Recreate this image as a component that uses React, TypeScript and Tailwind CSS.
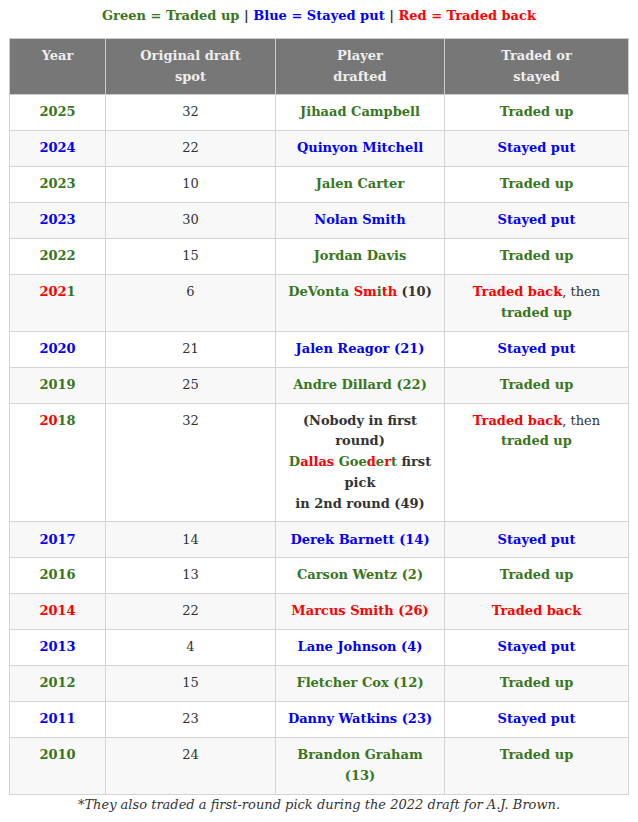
import React from 'react'

const G = 'text-[#38761d]'
const B = 'text-[#0000ff]'
const R = 'text-[#ff0000]'

type Row = {
  year: React.ReactNode
  spot: string
  player: React.ReactNode
  result: React.ReactNode
}

const up = <span className={`${G} font-bold`}>Traded up</span>
const put = <span className={`${B} font-bold`}>Stayed put</span>
const backThenUp = (
  <>
    <span className={`${R} font-bold`}>Traded back</span>, then{' '}
    <span className={`${G} font-bold`}>traded up</span>
  </>
)

const g = (t: string) => <span className={`${G} font-bold`}>{t}</span>
const b = (t: string) => <span className={`${B} font-bold`}>{t}</span>
const r = (t: string) => <span className={`${R} font-bold`}>{t}</span>

const rows: Row[] = [
  { year: g('2025'), spot: '32', player: g('Jihaad Campbell'), result: up },
  { year: b('2024'), spot: '22', player: b('Quinyon Mitchell'), result: put },
  { year: g('2023'), spot: '10', player: g('Jalen Carter'), result: up },
  { year: b('2023'), spot: '30', player: b('Nolan Smith'), result: put },
  { year: g('2022'), spot: '15', player: g('Jordan Davis'), result: up },
  {
    year: (
      <>
        {r('202')}
        {g('1')}
      </>
    ),
    spot: '6',
    player: (
      <>
        {g('DeVonta ')}
        {r('Sm')}
        {g('i')}
        {r('th')} <span className="font-bold">(10)</span>
      </>
    ),
    result: backThenUp,
  },
  { year: b('2020'), spot: '21', player: b('Jalen Reagor (21)'), result: put },
  { year: g('2019'), spot: '25', player: g('Andre Dillard (22)'), result: up },
  {
    year: (
      <>
        {r('20')}
        {g('18')}
      </>
    ),
    spot: '32',
    player: (
      <span className="font-bold">
        (Nobody in first round)
        <br />
        {g('D')}
        {r('allas')} {g('Goe')}
        {r('d')}
        {g('e')}
        {r('r')}
        {g('t')} first pick
        <br />
        in 2nd round (49)
      </span>
    ),
    result: backThenUp,
  },
  { year: b('2017'), spot: '14', player: b('Derek Barnett (14)'), result: put },
  { year: g('2016'), spot: '13', player: g('Carson Wentz (2)'), result: up },
  {
    year: r('2014'),
    spot: '22',
    player: r('Marcus Smith (26)'),
    result: <span className={`${R} font-bold`}>Traded back</span>,
  },
  { year: b('2013'), spot: '4', player: b('Lane Johnson (4)'), result: put },
  { year: g('2012'), spot: '15', player: g('Fletcher Cox (12)'), result: up },
  { year: b('2011'), spot: '23', player: b('Danny Watkins (23)'), result: put },
  { year: g('2010'), spot: '24', player: g('Brandon Graham (13)'), result: up },
]

export default function App() {
  return (
    <div
      className="w-[638px] min-h-[822px] bg-white text-[#333] text-[13px] leading-[20.75px]"
      style={{ fontFamily: '"DejaVu Serif", serif' }}
    >
      <p className="pt-[6px] pb-[11px] text-center font-bold text-[#333]">
        <span className={G}>Green = Traded up</span> |{' '}
        <span className={B}>Blue = Stayed put</span> |{' '}
        <span className={R}>Red = Traded back</span>
      </p>

      <table className="mx-[9px] w-[619px] table-fixed border-collapse text-center">
        <colgroup>
          <col className="w-[96px]" />
          <col className="w-[170px]" />
          <col className="w-[169px]" />
          <col className="w-[184px]" />
        </colgroup>
        <thead>
          <tr className="bg-[#777777] text-[#eeeeee] font-bold">
            <th className="border border-[#cccccc] px-[20px] py-[7px] align-top">Year</th>
            <th className="border border-[#cccccc] px-[30px] py-[7px] align-top">Original draft spot</th>
            <th className="border border-[#cccccc] px-[40px] py-[7px] align-top">Player drafted</th>
            <th className="border border-[#cccccc] px-[45px] py-[7px] align-top">Traded or stayed</th>
          </tr>
        </thead>
        <tbody>
          {rows.map((row, i) => (
            <tr key={i} className={i % 2 === 1 ? 'bg-[#f8f8f8]' : 'bg-white'}>
              <td className="border border-[#d4d4d4] px-2 py-[7.1px] align-top">{row.year}</td>
              <td className="border border-[#d4d4d4] px-2 py-[7.1px] align-top">{row.spot}</td>
              <td className="border border-[#d4d4d4] px-2 py-[7.1px] align-top">{row.player}</td>
              <td className="border border-[#d4d4d4] px-2 py-[7.1px] align-top">{row.result}</td>
            </tr>
          ))}
        </tbody>
      </table>

      <p className="text-center italic">
        *They also traded a first-round pick during the 2022 draft for A.J. Brown.
      </p>
    </div>
  )
}
